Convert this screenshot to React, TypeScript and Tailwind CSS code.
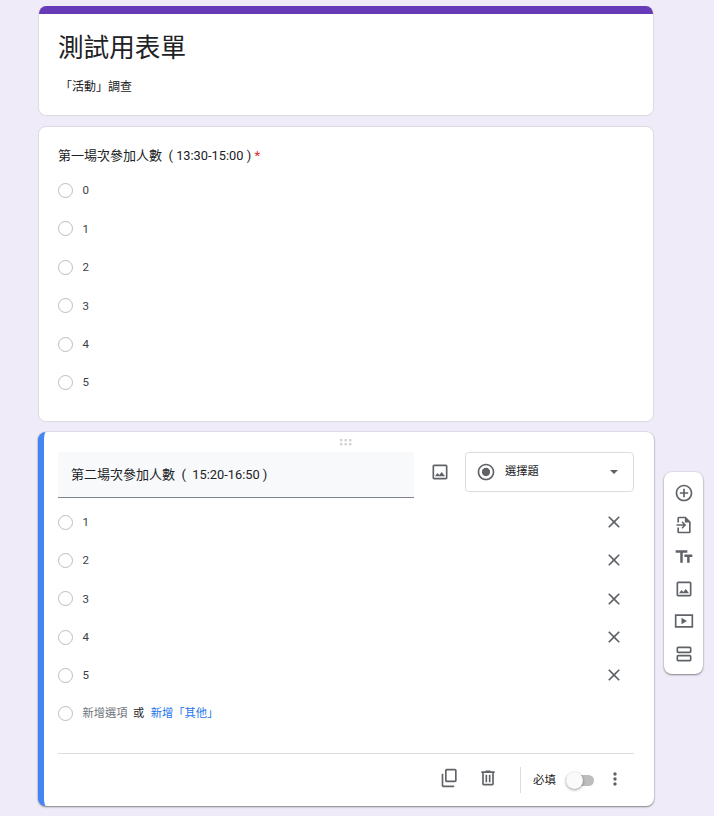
const paths = {
  add: 'M13 7h-2v4H7v2h4v4h2v-4h4v-2h-4V7zm-1-5C6.48 2 2 6.48 2 12s4.48 10 10 10 10-4.48 10-10S17.52 2 12 2zm0 18c-4.41 0-8-3.59-8-8s3.59-8 8-8 8 3.59 8 8-3.59 8-8 8z',
  importFile: 'M14 2H6c-1.1 0-2 .9-2 2v5h2V4h7v5h5v11H6v-5H4v5c0 1.1.9 2 2 2h12c1.1 0 2-.9 2-2V8l-6-6zM3 11h8.2L9 8.8l1.2-1.2 4.4 4.4-4.4 4.4L9 15.2l2.2-2.2H3z',
  title: 'M2 4v3h5.5v12h3V7H16V4H2zm20 5h-9.5v3h3.25v7h3v-7H22V9z',
  image: 'M19 5v14H5V5h14m0-2H5c-1.1 0-2 .9-2 2v14c0 1.1.9 2 2 2h14c1.1 0 2-.9 2-2V5c0-1.1-.9-2-2-2zm-4.86 8.86l-3 3.87L9 13.14 6 17h12l-3.86-5.14z',
  video: 'M1 4v16h22V4H1zm20 14H3V6h18v12zM9 8v8l6.5-4z',
  section: 'M19 13H5c-1.1 0-2 .9-2 2v4c0 1.1.9 2 2 2h14c1.1 0 2-.9 2-2v-4c0-1.1-.9-2-2-2zm0 6H5v-4h14v4zm0-16H5c-1.1 0-2 .9-2 2v4c0 1.1.9 2 2 2h14c1.1 0 2-.9 2-2V5c0-1.1-.9-2-2-2zm0 6H5V5h14v4z',
  copy: 'M16 1H8c-1.1 0-2 .9-2 2v12c0 1.1.9 2 2 2h10c1.1 0 2-.9 2-2V3c0-1.1-.9-2-2-2h-2zm2 14H8V3h10v12zM4 7H2v14c0 1.1.9 2 2 2h13v-2H4V7z',
  trash: 'M15 4V3H9v1H4v2h1v13c0 1.1.9 2 2 2h10c1.1 0 2-.9 2-2V6h1V4h-5zm2 15H7V6h10v13zM9 8h2v9H9zm4 0h2v9h-2z',
  close: 'M19 6.41L17.59 5 12 10.59 6.41 5 5 6.41 10.59 12 5 17.59 6.41 19 12 13.41 17.59 19 19 17.59 13.41 12z',
  radio: 'M12 7c-2.76 0-5 2.24-5 5s2.24 5 5 5 5-2.24 5-5-2.24-5-5-5zm0-5C6.48 2 2 6.48 2 12s4.48 10 10 10 10-4.48 10-10S17.52 2 12 2zm0 18c-4.42 0-8-3.58-8-8s3.58-8 8-8 8 3.58 8 8-3.58 8-8 8z',
}

function Icon({ d, size = 20 }: { d: string; size?: number }) {
  return (
    <svg width={size} height={size} viewBox="0 0 24 24" fill="#5f6368" className="shrink-0">
      <path d={d} />
    </svg>
  )
}

function Radio() {
  return <span className="w-[15px] h-[15px] rounded-full border border-[#bdbdbd] bg-white shrink-0" />
}

function DragHandle() {
  return (
    <div className="h-5 flex items-center justify-center">
      <svg width="14" height="7" viewBox="0 0 14 7" fill="#d0d2d6">
        {[1, 5.5, 10].map(x =>
          [0, 4].map(y => <rect key={`${x}-${y}`} x={x} y={y} width="2.4" height="2.4" />),
        )}
      </svg>
    </div>
  )
}

export default function App() {
  return (
    <div className="relative h-[816px] overflow-hidden bg-[#f0ebf8] pt-[6px] pl-[38px] font-['Roboto','Noto_Sans_CJK_TC',sans-serif] text-[#202124]">
      <div className="w-[616px] flex flex-col gap-[10px]">
        {/* Form title */}
        <div className="h-[110px] rounded-lg overflow-hidden bg-white border border-[#dadce0] border-t-0">
          <div className="h-2 bg-[#673ab7]" />
          <div className="pl-[19px]">
            <h1 className="mt-[17px] text-[25.6px] leading-[34px] font-normal">測試用表單</h1>
            <p className="mt-[13px] ml-[2px] text-[12px] leading-[18px]">「活動」調查</p>
          </div>
        </div>

        {/* First question */}
        <div className="h-[296px] rounded-lg bg-white border border-[#dadce0] pl-[19px] pt-[19px]">
          <div className="text-[13px] leading-[20px] whitespace-pre">
            第一場次參加人數  ( <span className="text-[12.8px]">13:30-15:00</span> ) <span className="text-[#d93025]">*</span>
          </div>
          <div className="mt-[5.4px]">
            {['0', '1', '2', '3', '4', '5'].map(label => (
              <div key={label} className="h-[38.4px] flex items-center gap-[9.5px] text-[11.5px] text-[#3c4043]">
                <Radio />
                <span className="pt-[1px]">{label}</span>
              </div>
            ))}
          </div>
        </div>

        {/* Question being edited */}
        <div className="h-[374px] rounded-lg bg-white border-l-[6px] border-[#4285f4] pl-[14px] pr-5 shadow-[0_1px_2px_rgba(60,64,67,0.6),0_0_0_1px_rgba(218,220,224,0.6)]">
          <DragHandle />
          <div className="flex items-start">
            <div className="w-[356px] h-[46px] bg-[#f8f9fa] border-b border-[#80868b] pl-[13px] flex items-center text-[13px] whitespace-pre">
              第二場次參加人數  (  <span className="text-[12.8px]">15:20-16:50</span> )
            </div>
            <div className="w-[51px] h-[39px] flex items-center justify-center">
              <Icon d={paths.image} />
            </div>
            <div className="w-[169px] h-[40px] rounded border border-[#dadce0] flex items-center pl-[10px] pr-[15px]">
              <Icon d={paths.radio} />
              <span className="ml-[9px] pt-[1px] text-[11.25px]">選擇題</span>
              <span className="ml-auto w-0 h-0 border-x-[4px] border-x-transparent border-t-[4px] border-t-[#5f6368]" />
            </div>
          </div>

          <div className="mt-[5px]">
            {['1', '2', '3', '4', '5'].map(label => (
              <div key={label} className="h-[38.3px] flex items-center gap-[9.5px] text-[11.5px] text-[#3c4043]">
                <Radio />
                <span className="pt-[1px]">{label}</span>
                <span className="ml-auto mr-[10px]">
                  <Icon d={paths.close} />
                </span>
              </div>
            ))}
            <div className="h-[38.3px] flex items-center gap-[9.5px] text-[11.25px]">
              <Radio />
              <span className="pt-[1px] text-[#70757a]">新增選項</span>
              <span className="pt-[1px] -ml-[4px]">或</span>
              <span className="pt-[1px] -ml-[3px] text-[#1a73e8]">新增「其他」</span>
            </div>
          </div>

          <div className="mt-[20px] border-t border-[#dadce0] h-[52px] flex items-center justify-end pt-[2px]">
            <div className="flex items-center gap-[18px] -mt-[4px]">
              <Icon d={paths.copy} />
              <Icon d={paths.trash} />
            </div>
            <div className="ml-[22px] w-px h-[26px] bg-[#dadce0]" />
            <span className="ml-[12px] text-[11.5px]">必填</span>
            <div className="relative ml-[10px] w-[28px] h-[11px] rounded-full bg-[#bdbdbd]">
              <span className="absolute left-0 -top-[3px] w-[17px] h-[17px] rounded-full bg-[#fafafa] shadow-[0_1px_3px_rgba(0,0,0,0.4)]" />
            </div>
            <span className="ml-[11px] mr-[9px] -mt-[3px]">
              <Icon d="M12 8c1.1 0 2-.9 2-2s-.9-2-2-2-2 .9-2 2 .9 2 2 2zm0 2c-1.1 0-2 .9-2 2s.9 2 2 2 2-.9 2-2-.9-2-2-2zm0 6c-1.1 0-2 .9-2 2s.9 2 2 2 2-.9 2-2-.9-2-2-2z" />
            </span>
          </div>
        </div>
      </div>

      {/* Floating toolbar */}
      <div className="absolute left-[664px] top-[472px] w-[39px] h-[202px] rounded-lg bg-white pt-[4.5px] flex flex-col shadow-[0_1px_2px_rgba(60,64,67,0.6),0_0_0_1px_rgba(218,220,224,0.5)]">
        {[paths.add, paths.importFile, paths.title, paths.image, paths.video, paths.section].map(d => (
          <div key={d} className="h-[32.2px] flex items-center justify-center">
            <Icon d={d} />
          </div>
        ))}
      </div>
    </div>
  )
}
